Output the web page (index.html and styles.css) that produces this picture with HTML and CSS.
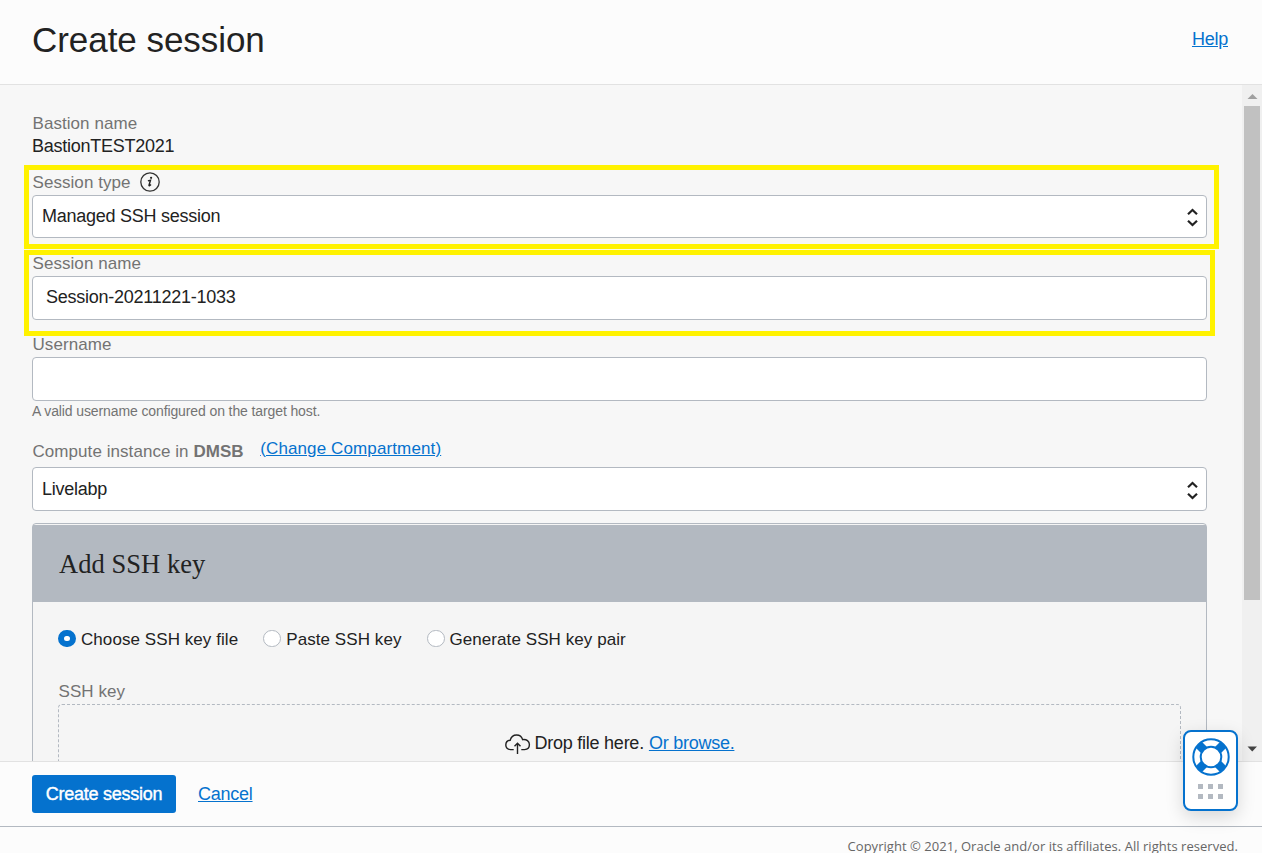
FILE: index.html
```html
<!DOCTYPE html>
<html lang="en">
<head>
<meta charset="utf-8">
<title>Create session</title>
<link rel="stylesheet" href="styles.css">
</head>
<body>
<div class="app">
  <header class="header">
    <h1 class="title">Create session</h1>
    <a class="link help" href="#">Help</a>
  </header>
  <div class="viewport">
    <main class="form">
      <div class="row name-row">
        <div class="label">Bastion name</div>
        <div class="value">BastionTEST2021</div>
      </div>
      <div class="row type-row">
        <div class="label">Session type
          <svg class="info" width="20" height="20" viewBox="0 0 20 20"><circle cx="10" cy="10" r="9.200" fill="none" stroke="#333" stroke-width="1.300"/><path d="M7.900 8.900l2.600-.7-1.500 5c-.2.900.5.800 2-.6" fill="none" stroke="#222" stroke-width="1.400"/><circle cx="11.100" cy="5.800" r="1.100" fill="#222"/></svg>
        </div>
        <div class="control select">Managed SSH session
          <svg width="11" height="19" viewBox="0 0 11 19"><path d="M1 6.300L5.500 2L10 6.300M1 12.700L5.500 17L10 12.700" fill="none" stroke="#222" stroke-width="2.200"/></svg>
        </div>
        <div class="highlight highlight-type"></div>
      </div>
      <div class="row session-row">
        <div class="label">Session name</div>
        <div class="control input">Session-20211221-1033</div>
        <div class="highlight highlight-name"></div>
      </div>
      <div class="row user-row">
        <div class="label">Username</div>
        <div class="control input"></div>
        <div class="hint">A valid username configured on the target host.</div>
      </div>
      <div class="row compute-row">
        <div class="label compute-label"><span>Compute instance in <b>DMSB</b></span><a class="link change" href="#">(Change Compartment)</a></div>
        <div class="control select">Livelabp
          <svg width="11" height="19" viewBox="0 0 11 19"><path d="M1 6.300L5.500 2L10 6.300M1 12.700L5.500 17L10 12.700" fill="none" stroke="#222" stroke-width="2.200"/></svg>
        </div>
      </div>
      <section class="panel">
        <h2 class="panel-title">Add SSH key</h2>
        <div class="panel-body">
          <div class="radios">
            <div class="option"><span class="radio checked"></span>Choose SSH key file</div>
            <div class="option"><span class="radio"></span>Paste SSH key</div>
            <div class="option"><span class="radio"></span>Generate SSH key pair</div>
          </div>
          <div class="label">SSH key</div>
          <div class="drop">
            <svg width="26" height="21" viewBox="0 0 26 21"><path d="M8.700 15.600H5.500C2.500 15.600.8 13.600.8 11c0-2.700 1.700-4.700 4.400-4.800C6 3 8.400 1 11.600 1c3 0 5.200 1.700 6 4.600 4-.6 6.800 1.700 6.800 5 0 3-2 5-4.800 5h-3.300M12.500 20V9.300M9.500 12.300l3-3 3 3" fill="none" stroke="#222" stroke-width="1.400"/></svg>
            <span class="drop-text">Drop file here.</span><a class="link" href="#">Or browse.</a>
          </div>
        </div>
      </section>
    </main>
    <div class="scrollbar">
      <svg width="20" height="21" viewBox="0 0 20 21"><path d="M5.500 14L10.500 9L15.500 14z" fill="#a0a0a0"/></svg>
      <div class="thumb"></div>
      <svg class="down" width="20" height="21" viewBox="0 0 20 21"><path d="M5.500 6.500H15L10.250 11.500z" fill="#444"/></svg>
    </div>
  </div>
  <div class="actions">
    <button class="primary">Create session</button>
    <a class="link" href="#">Cancel</a>
  </div>
  <footer class="footer">Copyright © 2021, Oracle and/or its affiliates. All rights reserved.</footer>
  <div class="support">
    <svg width="38" height="38" viewBox="0 0 38 38"><g fill="none" stroke="#0572ce"><path d="M6.500 6.500L12 12M31.500 6.500L26 12M6.500 31.500L12 26M31.500 31.500L26 26" stroke-width="8.500"/><circle cx="19" cy="19" r="17.700" stroke-width="2"/><circle cx="19" cy="19" r="10.300" fill="#fff" stroke-width="2"/></g></svg>
    <div class="dots"><i></i><i></i><i></i><i></i><i></i><i></i></div>
  </div>
</div>
</body>
</html>
```
FILE: styles.css
```css
* { box-sizing: border-box; }
body { margin: 0; font-family: "Liberation Sans", Arial, sans-serif; font-size: 18px; letter-spacing: -0.25px; color: #222; }
.app { position: relative; width: 1262px; height: 853px; display: flex; flex-direction: column; overflow: hidden; background: #fcfcfc; }
.header { height: 85px; flex: none; display: flex; justify-content: space-between; padding: 20px 34px 0 32px; border-bottom: 1px solid #e2e2e2; }
.title { margin: 0; font-size: 35px; line-height: 40px; font-weight: 400; letter-spacing: -0.05px; }
.link { color: #0572ce; text-decoration: underline; }
.help { line-height: 38px; }
.viewport { height: 676px; flex: none; display: flex; overflow: hidden; background: #f7f7f7; }
.form { width: 1242px; padding: 28px 35px 0 32px; }
.row { position: relative; }
.name-row { height: 57px; }
.type-row { height: 84px; }
.session-row { height: 81px; }
.user-row { height: 103px; }
.label { height: 22px; line-height: 21px; padding-left: 0.5px; font-size: 17px; letter-spacing: 0.06px; color: #737373; display: flex; }
.value { line-height: 22px; }
.type-row .label { height: 25px; line-height: 25px; }
.info { margin: 2px 0 0 9.5px; }
.control { height: 44px; border: 1px solid #b3b9c1; border-radius: 4px; background: #fff; line-height: 40px; }
.type-row .control { height: 43px; }
.compute-row .control { line-height: 42px; }
.select { padding: 0 8px 0 9px; display: flex; justify-content: space-between; }
.select svg { margin-top: 12px; }
.compute-row .select svg { margin-top: 13px; }
.input { padding-left: 13px; }
.session-row .label, .user-row .label { height: 22px; line-height: 19px; }
.highlight { position: absolute; border: 5px solid #fff200; }
.highlight-type { left: -8px; top: -5px; width: 1195px; height: 84px; box-shadow: 0 1px #fcfcdc; }
.highlight-name { left: -8px; top: -4px; width: 1191px; height: 86px; }
.hint { font-size: 14px; line-height: 21px; letter-spacing: -0.11px; color: #737373; }
.compute-row { height: 85px; }
.compute-row .compute-label { height: 29px; line-height: 27px; gap: 16.5px; }
.change { line-height: 21px; letter-spacing: 0.12px; }
.panel { height: 260px; border: 1px solid #b3b9c1; border-radius: 4px 4px 0 0; padding-top: 1px; background: #f5f5f5; }
.panel-title { margin: 0; height: 77px; padding-left: 26px; background: #b3b9c1; font: 400 26.5px/78px "Liberation Serif", "Times New Roman", serif; letter-spacing: 0.06px; }
.panel-body { padding: 25px 25px 0; }
.radios { display: flex; gap: 25px; height: 54px; }
.option { display: flex; gap: 5px; line-height: 25px; height: 25px; font-size: 17px; letter-spacing: 0.07px; }
.radio { width: 18px; height: 17px; margin-top: 3px; border: 1px solid #b3b9c1; border-radius: 9px; background: #fff; }
.checked { border: 6px solid #0572ce; }
.panel .label { height: 23px; }
.drop { height: 80px; border: 1px dashed #b3b9c1; border-radius: 4px; display: flex; justify-content: center; padding-top: 27px; line-height: 22px; }
.drop svg { margin: 2px 4px 0 0; }
.drop-text { margin-right: 5px; }
.scrollbar { width: 20px; background: #f0f0f0; display: flex; flex-direction: column; align-items: center; }
.scrollbar svg { flex: none; }
.thumb { width: 16px; height: 494px; flex: none; background: #c1c1c1; }
.down { margin-top: 140px; }
.actions { height: 66px; flex: none; display: flex; align-items: flex-start; gap: 22px; padding: 13px 32px 0; border-top: 1px solid #e2e2e2; border-bottom: 1px solid #b3b9c1; }
.actions .link { line-height: 38px; }
.primary { width: 144px; height: 38px; padding: 0; border: 0; border-radius: 3px; background: #0572ce; color: #fff; font: inherit; letter-spacing: -0.25px; -webkit-text-stroke: 0.4px #fff; }
.footer { padding: 10px 24px 0; text-align: right; white-space: nowrap; font: 13px/19px "Open Sans", "Noto Sans", sans-serif; letter-spacing: 0.035px; color: #666; }
.support { position: absolute; left: 1183px; top: 729.5px; width: 55px; height: 81px; border: 2px solid #0572ce; border-radius: 8px; background: #fff; box-shadow: 0 6px 18px rgba(0,0,0,.15); display: flex; flex-direction: column; align-items: center; padding-top: 6px; }
.dots { margin-top: 8.5px; display: grid; grid-template-columns: repeat(3, 5px); gap: 5px; }
.dots i { width: 5px; height: 5px; background: #b3b9c1; }
```
